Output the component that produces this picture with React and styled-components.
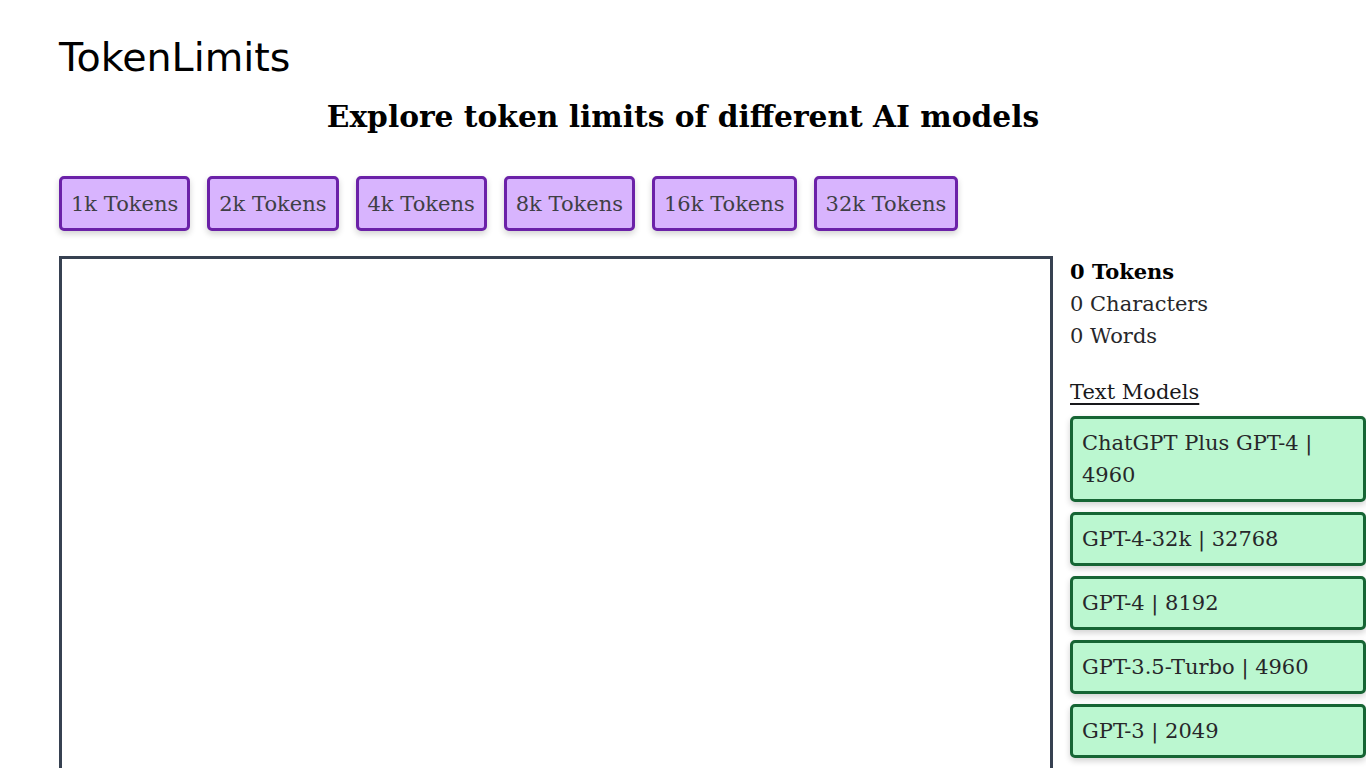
import React from 'react';
import styled, { createGlobalStyle } from 'styled-components';

const GlobalStyle = createGlobalStyle`
html, body {
    margin: 0;
    padding: 0;
    background: #ffffff;
    overflow: hidden;
}
body {
    font-family: "DejaVu Serif", "Liberation Serif", serif;
    color: #111827;
}
* {
    box-sizing: border-box;
}
`

const Page = styled.div`
padding: 0 0 0 59px;
width: 1366px;
`

const Logo = styled.h1`
margin: 0;
padding-top: 33px;
font-family: "DejaVu Sans", sans-serif;
font-weight: 400;
font-size: 39.6px;
line-height: 48px;
color: #000;
`

const Heading = styled.h2`
margin: 0;
padding-top: 15px;
margin-left: -59px;
text-align: center;
font-size: 29.7px;
line-height: 42px;
font-weight: 700;
color: #000;
`

const TokenRow = styled.div`
display: flex;
gap: 17px;
margin-top: 38px;
`

const TokenButton = styled.button`
font-family: inherit;
font-size: 21px;
font-weight: 400;
color: #3f3f46;
height: 55px;
padding: 0 9px;
background: #d8b4fe;
border: 3px solid #6b21a8;
border-radius: 5px;
box-shadow: 0 3px 6px rgba(0, 0, 0, 0.18);
cursor: pointer;
`

const Workspace = styled.div`
display: flex;
gap: 17px;
margin-top: 25px;
`

const Editor = styled.textarea`
flex: 0 0 994px;
height: 560px;
border: 3px solid #374151;
border-radius: 0;
resize: none;
font-family: inherit;
font-size: 21px;
padding: 8px;
outline: none;
`

const Sidebar = styled.aside`
flex: 0 0 296px;
display: flex;
flex-direction: column;
`

const Stat = styled.div`
font-size: 21px;
line-height: 32px;
color: ${p => (p.bold ? '#000' : '#27272a')};
font-weight: ${p => (p.bold ? 700 : 400)};
`

const Section = styled.div`
margin-top: 24px;
font-size: 21px;
line-height: 32px;
text-decoration: underline;
text-underline-offset: 4px;
color: #18181b;
`

const ModelList = styled.div`
display: flex;
flex-direction: column;
gap: 10px;
margin-top: 8px;
`

const ModelCard = styled.button`
text-align: left;
font-family: inherit;
font-size: 21px;
line-height: 32px;
color: #27272a;
padding: 8px 9px;
min-height: 54px;
background: #bbf7d0;
border: 3px solid #166534;
border-radius: 5px;
box-shadow: 0 3px 6px rgba(0, 0, 0, 0.18);
cursor: pointer;
`

const tokenSizes = ['1k', '2k', '4k', '8k', '16k', '32k'];

const models = [
    { name: 'ChatGPT Plus GPT-4', limit: 4960 },
    { name: 'GPT-4-32k', limit: 32768 },
    { name: 'GPT-4', limit: 8192 },
    { name: 'GPT-3.5-Turbo', limit: 4960 },
    { name: 'GPT-3', limit: 2049 },
];

export default function App() {
    return <Page>
        <GlobalStyle />
        <Logo>TokenLimits</Logo>
        <Heading>Explore token limits of different AI models</Heading>
        <TokenRow>
            {tokenSizes.map(size => <TokenButton key={size}>{size} Tokens</TokenButton>)}
        </TokenRow>
        <Workspace>
            <Editor aria-label='Text input' />
            <Sidebar>
                <Stat bold>0 Tokens</Stat>
                <Stat>0 Characters</Stat>
                <Stat>0 Words</Stat>
                <Section>Text Models</Section>
                <ModelList>
                    {models.map(m => <ModelCard key={m.name}>{m.name} | {m.limit}</ModelCard>)}
                </ModelList>
            </Sidebar>
        </Workspace>
    </Page>
}
